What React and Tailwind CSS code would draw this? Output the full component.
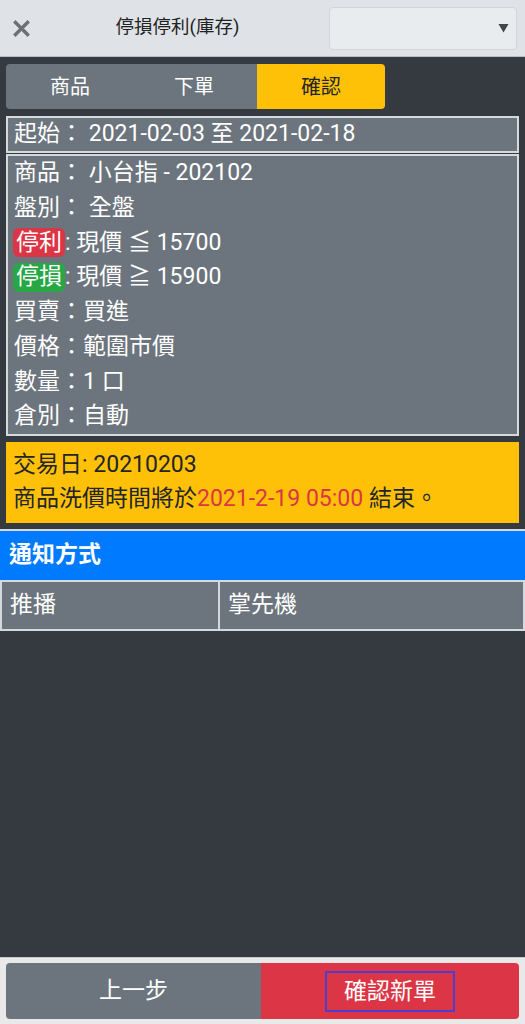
import React from "react";

const font = { fontFamily: 'Roboto, "Noto Sans CJK TC", sans-serif' };

export default function App() {
  return (
    <div className="h-[1024px] w-full flex flex-col bg-[#343a40]" style={font}>
      {/* header */}
      <div className="h-[57px] shrink-0 bg-[#dfe2e6] border-b border-[#b9bdc2] flex items-center">
        <div className="w-[42px] flex justify-center pl-[1px]">
          <svg width="17" height="17" viewBox="0 0 17 17">
            <path d="M2.5 2.5 L14.5 14.5 M14.5 2.5 L2.5 14.5" stroke="#6c6f73" strokeWidth="3.4" strokeLinecap="square" />
          </svg>
        </div>
        <div className="w-[270px] text-center text-[18.5px] text-[#222] pl-[1px]">停損停利(庫存)</div>
        <div className="ml-[17px] w-[188px] h-[43px] rounded-[4px] bg-[#e9ecef] border border-[#d2d6da] flex items-center justify-end pr-[7px]">
          <svg width="11" height="10" viewBox="0 0 11 10">
            <path d="M0.5 1 L10.5 1 L5.5 9.5 Z" fill="#444" />
          </svg>
        </div>
      </div>

      {/* content */}
      <div className="flex-1 flex flex-col pt-[7px]">
        <div className="mx-[6px] w-[379px] h-[45px] flex rounded-[4px] overflow-hidden text-[20px]">
          <div className="w-[125px] bg-[#6c757d] text-white flex items-center justify-center pl-[3px]">商品</div>
          <div className="w-[126px] bg-[#6c757d] text-white flex items-center justify-center">下單</div>
          <div className="flex-1 bg-[#ffc107] text-[#212529] flex items-center justify-center">確認</div>
        </div>

        <div className="mx-[6px] mt-[7px] h-[37px] border-2 border-[#d6d9dc] bg-[#6c757d] text-white text-[23px] flex items-center pl-[6px] whitespace-pre">
          起始： 2021-02-03 至 2021-02-18
        </div>

        <div className="mx-[6px] mt-[1px] border-2 border-[#d6d9dc] bg-[#6c757d] text-white text-[23px] pl-[6px]">
          <div className="h-[34.75px] flex items-center whitespace-pre">商品： 小台指 - 202102</div>
          <div className="h-[34.75px] flex items-center whitespace-pre">盤別： 全盤</div>
          <div className="h-[34.75px] flex items-center whitespace-pre">
            <span className="bg-[#dc3545] rounded-[6px] px-[3px] h-[29px] flex items-center -ml-[1px]">停利</span>: 現價 ≦ 15700
          </div>
          <div className="h-[34.75px] flex items-center whitespace-pre">
            <span className="bg-[#28a745] rounded-[6px] px-[3px] h-[29px] flex items-center -ml-[1px]">停損</span>: 現價 ≧ 15900
          </div>
          <div className="h-[34.75px] flex items-center">買賣：買進</div>
          <div className="h-[34.75px] flex items-center">價格：範圍市價</div>
          <div className="h-[34.75px] flex items-center">數量：1 口</div>
          <div className="h-[34.75px] flex items-center">倉別：自動</div>
        </div>

        <div className="mx-[6px] mt-[6px] h-[81px] bg-[#ffc107] text-[#212529] text-[23px] pl-[7px] pt-[6px] leading-[34px]">
          <div>交易日: 20210203</div>
          <div>商品洗價時間將於<span className="text-[#dc3545]">2021-2-19 05:00</span> 結束。</div>
        </div>

        <div className="mt-[6px] border-t-2 border-[#d6d9dc]">
          <div className="h-[49px] bg-[#007bff] text-white text-[23px] font-bold flex items-center pl-[9px]">通知方式</div>
          <div className="h-[51px] flex bg-[#6c757d] text-white text-[23px] border-y-2 border-[#d6d9dc]">
            <div className="w-[220px] border-l-2 border-r-2 border-[#d6d9dc] flex items-center pl-[8px]">推播</div>
            <div className="flex-1 border-r-2 border-[#d6d9dc] flex items-center pl-[8px]">掌先機</div>
          </div>
        </div>
      </div>

      {/* footer */}
      <div className="h-[67px] shrink-0 bg-[#e9e9e9] border-t border-[#c8c8c8] pt-[5px] px-[6px]">
        <div className="h-[56px] flex rounded-[4px] overflow-hidden text-[23px] text-white">
          <div className="w-[255px] bg-[#6c757d] flex items-center justify-center">上一步</div>
          <div className="flex-1 bg-[#dc3545] flex items-center justify-center">
            <span className="border-2 border-[#4a3fd0] px-[17px] py-[3px] leading-[31px]">確認新單</span>
          </div>
        </div>
      </div>
    </div>
  );
}
